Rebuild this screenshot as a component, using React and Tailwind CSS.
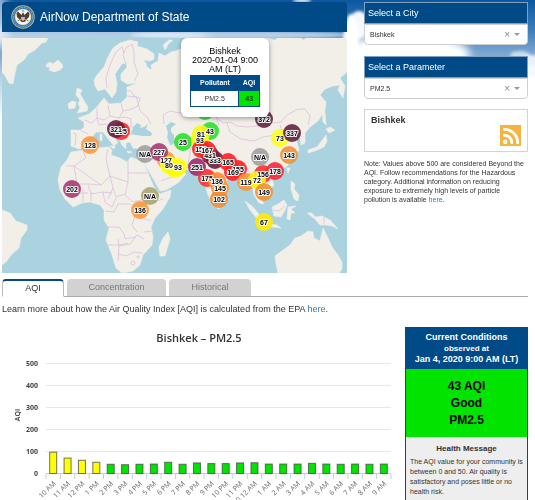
import React from "react";
import { Rss } from "lucide-react";

const land = [
  "M2 38H48L46 42 42 43 35 50 28 54 24 60 17 65 15 73 13 84 9 83 4 74 2 73Z",
  "M47 64L50 62 53 64 58 60 62 64 63 67 60 70 54 72 49 70 50 67 46 67Z",
  "M94 80L97 75 104 67 108 57 113 48 120 43 130 40 138 42 137 46 147 49 154 54 154 59 150 61 143 60 146 63 147 67 152 70 151 65 158 61 159 53 165 56 171 52 180 49 190 45 198 38H347V72L340 78 345 86 343 98 338 90 340 85 333 86 325 89 320 95 326 102 325 110 318 121 310 127 305 133 305 143 301 145 300 136 292 136 297 142 299 150 294 158 286 167 276 171 270 174 274 185 267 192 261 187 257 188 259 196 264 204 259 203 254 195 252 185 247 178 243 172 235 173 225 182 219 190 217 203 214 206 208 195 203 177 196 174 192 170 181 169 169 161 167 163 175 170 180 168 186 174 178 183 166 190 160 191 154 180 144 163 147 156 147 149 140 149 133 148 130 142 126 143 126 149 122 145 118 137 109 129 110 134 118 142 114 146 110 141 103 132 96 132 92 137 89 140 88 145 79 149 71 146 71 130 80 130 84 128 84 122 78 118 89 114 97 107 100 103 104 98 109 104 121 103 127 97 127 87 138 83 127 84 121 80 121 74 127 67 126 63 122 64 115 74 117 83 116 92 112 98 109 94 105 89 98 91 95 86Z",
  "M77 88L82 90 80 94 83 99 86 104 88 107 87 111 82 112 77 113 80 108 78 103 80 100 76 95Z",
  "M68 104L72 101 76 102 75 108 69 109Z",
  "M71 152L85 150 97 148 109 147 112 150 111 155 120 158 127 162 131 157 138 160 143 161 150 178 154 187 160 194 171 190 170 197 163 209 155 218 151 227 153 237 152 245 143 255 140 265 133 271 122 273 116 268 112 255 106 240 109 228 104 220 104 210 100 205 90 202 82 203 73 207 65 199 60 190 58 180 61 167 67 160Z",
  "M168 232L170 239 165 256 160 256 159 247 163 238Z",
  "M2 210L10 213 16 221 27 225 27 230 21 238 19 248 12 254 6 262 2 265Z",
  "M278 273L276 264 275 256 283 250 290 245 295 238 301 236 308 231 313 232 314 238 320 241 323 228 328 238 332 247 338 255 342 262 342 269 339 273Z",
  "M307 213L312 213 315 217 322 216 330 220 338 229 332 226 326 225 320 225 315 219Z",
  "M272 207L278 204 284 200 287 205 284 212 281 217 274 216Z",
  "M245 201L252 206 258 213 263 221 259 221 250 210Z",
  "M262 223L277 225 281 228 265 226Z",
  "M288 207L296 206 291 209 295 213 291 213 290 220 287 219Z",
  "M291 181L295 184 294 189 299 195 298 201 294 199 291 189Z",
  "M217 204L220 206 219 209 217 208Z",
  "M287 168L290 168 288 173Z",
  "M326 129L330 127 335 130 329 133ZM326 135L327 141 324 147 315 151 308 153 308 150 317 147Z",
  "M322 108L325 112 326 125 323 122Z",
  "M100 134L102 134 102 141 100 140ZM110 146L115 146 114 149ZM127 151L132 152 128 153ZM139 151L143 150 141 153Z",
  "M163 45L169 40 176 39 169 43 165 50Z",
];
const seas = [
  "M131 134L133 127 137 123 141 125 140 128 144 127 148 124 146 129 152 133 151 136 143 136 136 135Z",
  "M166 126L171 122 176 124 171 128 171 132 174 135 174 144 170 145 167 137 168 133Z",
  "M169 38H182V48L175 51 170 49 176 43Z",
  "M268 38H278L274 40ZM301 38L303 40 306 38Z",
];
const borders = [
  "M107 88L106 78 110 65 116 52 122 47 124 53 M126 64L123 55 126 48 132 44 134 52 134 62 138 74 134 81",
  "M84 120L92 123 97 118 97 108 M97 118L104 120 110 116 108 105 M110 116L119 118 123 111 121 103 M123 111L132 109 139 105 136 97 127 96 M122 89L131 91 134 96 140 98 138 105 141 112 147 117 151 124 M97 118L99 125 106 124 112 125 119 124 126 126 133 127 M119 118L125 117 131 119 131 126 M110 126L116 131 122 136 128 134 133 134 M73 133L76 134 75 146 M80 130L88 134",
  "M164 124L163 115 170 111 180 113 187 111 190 105 200 106 210 111 216 117 223 123 230 122 237 126 247 127 257 126 266 121 274 123 281 122 287 115 298 109 305 109 310 116 308 125",
  "M227 123L230 132 241 139 254 141 263 137 275 135 282 131 280 125 M216 117L219 125 210 131 204 137 M204 137L212 144 214 154 225 159 238 160 243 164 M172 142L184 141 190 145 190 155 187 168 M190 148L202 147 208 150 202 160 196 173 M147 148L158 146 164 152 165 161 M147 158L158 161 164 165 M161 181L174 176 178 170 M243 164L249 171 252 182 M252 172L260 178 266 174 M256 169L263 168 270 172",
  "M83 151L86 158 74 166 66 166 M74 166L101 185 110 176 106 159 108 149 M74 166L77 184 66 185 M77 184L88 184 101 185 M110 176L128 182 128 161 M128 173H147 M128 182L125 195 133 202 145 199 148 187 M110 176L113 188 108 199 M88 185L91 194 103 192 112 193 M113 188L116 197 125 194 M67 186L76 186 79 193 88 193 M83 188L83 202 M91 192L91 201 M103 192L105 202 112 207 116 198 M105 211L114 212 118 204 131 204 136 212 132 225 137 232 M107 227L119 227 124 234 125 239 136 237 M118 239L119 246 118 261 M119 246L130 244 137 235 144 239 M106 245L119 245 128 243 M118 254L126 256 134 252 142 253 M137 213L147 220 151 220 M141 202L145 214 M145 199L154 202 163 199 M144 232L152 231",
  "M273 210L279 211 285 206 M324 217L324 225",
];

const markers = [
  [121, 131, "195", "#ff2525"], [116, 129, "321", "#66213f"],
  [90, 145, "128", "#ff983b"], [72, 189, "202", "#a93b75"],
  [145, 154, "N/A", "#a0a0a0"], [166, 160, "127", "#ff983b"], [159, 152, "227", "#a93b75"],
  [150, 196, "N/A", "#a9a771"], [140, 210, "136", "#ff983b"],
  [175, 169, "", "#ffff00"], [169, 165, "80", "#ffff00"], [178, 167, "93", "#ffff00"],
  [205, 111, "", "#2be02b"], [183, 142, "25", "#2be02b"],
  [210, 131, "43", "#2be02b"], [201, 134, "81", "#f5fa16"], [200, 140, "93", "#f8f80e"],
  [201, 149, "159", "#ff2020"], [215, 160, "333", "#66213f"], [210, 155, "431", "#801e40"],
  [207, 150, "167", "#ff2020"], [228, 162, "165", "#ff2020"], [238, 169, "155", "#ff2020"],
  [233, 172, "169", "#ff2020"], [197, 167, "251", "#a02b70"],
  [207, 178, "175", "#ff3030"], [217, 181, "136", "#ff8b2b"],
  [220, 188, "145", "#ff983b"], [219, 199, "102", "#f18d31"],
  [246, 182, "119", "#f8943b"], [263, 174, "156", "#ff3030"], [257, 180, "72", "#fff21a"],
  [275, 171, "178", "#f7293a"], [264, 192, "149", "#ed9236"],
  [260, 157, "N/A", "#a0a0a0"], [289, 155, "143", "#ed9236"],
  [280, 138, "73", "#ffff18"], [292, 133, "337", "#66213f"],
  [264, 119, "372", "#66213f"], [264, 222, "67", "#ffea00"],
];

const readings = [
  ["10 AM", 97], ["11 AM", 70], ["12 PM", 60], ["1 PM", 51], ["2 PM", 42], ["3 PM", 40],
  ["4 PM", 42], ["5 PM", 43], ["6 PM", 51], ["7 PM", 42], ["8 PM", 48], ["9 PM", 45],
  ["10 PM", 45], ["11 PM", 48], ["Jan 4, 2020 12 AM", 49], ["1 AM", 43], ["2 AM", 43],
  ["3 AM", 43], ["4 AM", 46], ["5 AM", 43], ["6 AM", 42], ["7 AM", 43], ["8 AM", 42], ["9 AM", 43],
];

function Sky() {
  return (
    <svg aria-hidden="true" className="absolute inset-x-0 top-0 h-[150px] w-full" viewBox="0 0 535 150" preserveAspectRatio="none">
      <defs>
        <linearGradient id="sky" x1="0" y1="0" x2="0" y2="1">
          <stop offset="0" stopColor="#0b57a0" />
          <stop offset=".2" stopColor="#3c7dbb" />
          <stop offset=".5" stopColor="#b5cde5" />
          <stop offset=".8" stopColor="#fff" />
        </linearGradient>
        <filter id="soft"><feGaussianBlur stdDeviation="4" /></filter>
        <filter id="puff"><feGaussianBlur stdDeviation="1.5" /></filter>
      </defs>
      <rect width="535" height="150" fill="url(#sky)" />
      <g fill="#fff" filter="url(#soft)">
        <ellipse cx="60" cy="36" rx="150" ry="10" opacity=".6" />
        <ellipse cx="0" cy="20" rx="8" ry="30" opacity=".6" />
        <ellipse cx="380" cy="90" rx="75" ry="48" />
        <ellipse cx="500" cy="105" rx="90" ry="38" />
        <ellipse cx="405" cy="55" rx="65" ry="22" />
      </g>
      <g fill="#fff" filter="url(#puff)">
        <ellipse cx="359" cy="25" rx="10" ry="14" opacity=".95" />
        <ellipse cx="351" cy="46" rx="8" ry="32" />
        <ellipse cx="302" cy="0" rx="9" ry="3" opacity=".8" />
        <ellipse cx="240" cy="35" rx="110" ry="4" opacity=".6" />
        <ellipse cx="520" cy="55" rx="10" ry="4" opacity=".6" />
        <ellipse cx="532" cy="64" rx="12" ry="9" opacity=".8" />
      </g>
    </svg>
  );
}

function Seal() {
  return (
    <svg aria-label="Department of State seal" role="img" viewBox="0 0 48 48" className="size-6 shrink-0">
      <circle cx="24" cy="24" r="23.5" fill="#b9b98e" />
      <circle cx="24" cy="24" r="21.500" fill="#2f6ba5" />
      <circle cx="24" cy="24" r="19" fill="none" stroke="#a9c6dd" strokeWidth="2" strokeDasharray="2 1.500" />
      <circle cx="24" cy="24" r="16" fill="#fafaf5" stroke="#d9cf9a" />
      <circle cx="24" cy="12" r="3" fill="#9bbfd8" />
      <path d="M21 20L14 13 11 17 12 24 16 28 20 29 18 32 22 34 26 34 30 32 28 29 32 28 36 24 37 17 34 13 27 20 25 16 23 16Z" fill="#5a3c22" />
      <path d="M20 21H28V28L24 32 20 28Z" fill="#fff" />
      <path d="M20 20H28V24H20Z" fill="#264e86" />
      <path d="M21.500 24V29M24 24V31M26.500 24V29" stroke="#bd3333" strokeWidth="1.300" />
      <path d="M13 32L18 29M35 32L30 29" stroke="#547a45" strokeWidth="2" />
    </svg>
  );
}

function WorldMap() {
  return (
    <div className="relative mt-[6px] h-[235px] overflow-hidden bg-[#aad3df]">
      <svg role="img" aria-label="World air quality map" viewBox="2 38 345 235" preserveAspectRatio="xMidYMid slice" className="block size-full">
        <g fill="#f2efe9" stroke="#f2efe9" strokeWidth=".6" strokeLinejoin="round">
          {land.map((d) => <path key={d} d={d} />)}
        </g>
        {seas.map((d) => <path key={d} d={d} fill="#aad3df" />)}
        <g fill="none" stroke="#dcbfdc" strokeWidth=".8" strokeLinejoin="round">
          {borders.map((d) => <path key={d} d={d} />)}
          <circle cx="133" cy="263" r="2" />
          <circle cx="138" cy="257" r="1" />
        </g>
        <g fillOpacity=".9">
          {markers.map(([x, y, , color], i) => (
            <circle key={i} cx={x} cy={y} r="9" fill={color} />
          ))}
        </g>
        <g textAnchor="middle" fill="#000" stroke="#fff" strokeWidth="2" strokeLinejoin="round" paintOrder="stroke" className="font-['Liberation_Sans',Arial,sans-serif] text-[7px] font-bold">
          {markers.filter((m) => m[2]).map(([x, y, label], i) => (
            <text key={i} x={x} y={y + 3}>{label}</text>
          ))}
        </g>
      </svg>
      <div className="absolute top-0 left-[179px] w-[88px] rounded-md bg-white px-[9px] pt-[9px] pb-[10px] text-center shadow-[0_1px_5px_rgba(0,0,0,0.4)]">
        <p className="text-[9px] leading-[9px] text-black">Bishkek<br />2020-01-04 9:00<br />AM (LT)</p>
        <table className="mt-px w-full border-collapse border border-[#004b87] text-[7px] leading-[14px]">
          <thead className="bg-[#004b87] text-white">
            <tr><th scope="col">Pollutant</th><th scope="col">AQI</th></tr>
          </thead>
          <tbody>
            <tr className="h-4">
              <td className="border border-[#004b87]">PM2.5</td>
              <td className="border border-[#004b87] bg-[#00e400] font-bold">43</td>
            </tr>
          </tbody>
        </table>
      </div>
    </div>
  );
}

function Picker({ id, label, value, options }) {
  return (
    <div>
      <label htmlFor={id} className="block h-[22px] border border-[#7f9fbd] bg-[#004b87] px-[3px] text-[9px] leading-5 text-white">{label}</label>
      <div className="relative flex h-[21px] rounded-b-sm border border-[#cfcfcf] bg-white">
        <select id={id} defaultValue={value} className="h-[19px] w-full appearance-none bg-transparent px-[5px] text-[7px] leading-[18px] text-[#333] outline-none">
          {options.map((o) => <option key={o}>{o}</option>)}
        </select>
        <button type="button" aria-label={"Clear " + label} className="absolute top-[4px] right-[17px] text-[10px] leading-3 text-[#888]">×</button>
        <span className="pointer-events-none absolute top-[8px] right-[7px] border-x-[3px] border-t-[3px] border-x-transparent border-t-[#999]" />
      </div>
    </div>
  );
}

function Chart() {
  return (
    <svg role="img" aria-label="Bishkek – PM2.5 hourly AQI" viewBox="0 320 397 220" className="block w-full font-['Open_Sans','Noto_Sans',sans-serif]">
      <text x="199" y="342" textAnchor="middle" fill="#333" className="text-[11px] font-semibold">Bishkek – PM2.5</text>
      {[0, 100, 200, 300, 400, 500].map((v) => (
        <g key={v}>
          <path d={`M46 ${473.5 - v * 0.22}H391`} stroke={v ? "#e8e8e8" : "#c0d0e0"} />
          <text x="38" y={475.5 - v * 0.22} textAnchor="end" fill="#444" className="text-[7px] font-bold">{v}</text>
        </g>
      ))}
      <text transform="translate(20 415) rotate(-90)" textAnchor="middle" fill="#333" className="text-[7px] font-semibold">AQI</text>
      {readings.map(([label, v], i) => {
        const x = 53.2 + i * 14.375;
        return (
          <g key={label}>
            <path d={`M${x - 7.2} 474V479`} stroke="#c0d0e0" />
            <rect x={x - 3.5} y={473.5 - v * 0.22} width="7" height={v * 0.22} fill={v > 50 && i < 4 ? "#ffff00" : "#00e400"} stroke="#444" strokeOpacity=".75" />
            <text transform={`translate(${x + 3} 484) rotate(-45)`} textAnchor="end" fill="#666" className="text-[7px]">{label}</text>
          </g>
        );
      })}
      <path d="M391 474V479" stroke="#c0d0e0" />
    </svg>
  );
}

export default function App() {
  return (
    <div className="relative min-h-screen overflow-hidden bg-white font-['Liberation_Sans',Arial,sans-serif] text-[#333]">
      <Sky />
      <div className="relative">
        <div className="flex gap-[17px] pt-[2px] pr-[7px] pl-[2px]">
          <main className="min-w-0 flex-1">
            <header className="flex h-[30px] items-center gap-[5px] rounded-t bg-[#004b87] pl-[9px]">
              <Seal />
              <h1 className="text-[12px] text-white">AirNow Department of State</h1>
            </header>
            <WorldMap />
          </main>
          <aside className="w-[164px] shrink-0">
            <div className="flex flex-col gap-[11px]">
              <Picker id="city" label="Select a City" value="Bishkek" options={["Bishkek", "Beijing", "Delhi"]} />
              <Picker id="parameter" label="Select a Parameter" value="PM2.5" options={["PM2.5", "Ozone"]} />
            </div>
            <section className="mt-[10px] flex h-[43px] justify-between border border-[#d4d4d4] bg-white px-[6px]">
              <h2 className="pt-[4px] text-[9px] leading-3 font-bold">Bishkek</h2>
              <a href="#rss" aria-label="Bishkek RSS feed" className="mt-[15px] flex size-[21px] items-center justify-center bg-[#f5b33f] text-white">
                <Rss size={20} strokeWidth={3.5} />
              </a>
            </section>
            <p className="mt-[7px] text-[7px] leading-[9px]">Note: Values above 500 are considered Beyond the AQI. Follow recommendations for the Hazardous category. Additional information on reducing exposure to extremely high levels of particle pollution is available <a href="#beyond" className="text-[#337ab7]">here</a>.</p>
          </aside>
        </div>
        <nav role="tablist" aria-label="Data views" className="mt-[6px] mr-[7px] ml-[2px] flex h-[18px] gap-[3px] border-b border-[#aaa] text-[9px]">
          <button type="button" role="tab" aria-selected="true" className="-mb-px w-[62px] rounded-t-sm border border-t-2 border-[#bbb] border-t-[#004b87] border-b-white bg-white">AQI</button>
          <button type="button" role="tab" aria-selected="false" className="w-[99px] rounded-t bg-[#d2d2d2] text-[#777]">Concentration</button>
          <button type="button" role="tab" aria-selected="false" className="w-[82px] rounded-t bg-[#d2d2d2] text-[#777]">Historical</button>
        </nav>
        <p className="mt-[6px] pl-[2px] text-[9px] leading-3">Learn more about how the Air Quality Index [AQI] is calculated from the EPA <a href="#epa" className="text-[#337ab7]">here</a>.</p>
        <div className="mt-[5px] flex items-start gap-[8px] pr-[7px]">
          <div className="min-w-0 flex-1"><Chart /></div>
          <section className="mt-[7px] w-[123px] shrink-0 border border-[#004b87] bg-[#eee] text-center">
            <h2 className="bg-[#004b87] py-[4px] text-[9px] leading-[11px] font-bold text-white">Current Conditions<br /><span className="text-[8px]">observed at</span><br />Jan 4, 2020 9:00 AM (LT)</h2>
            <p className="bg-[#00e400] pt-[9px] pb-[8px] text-[12px] leading-[17px] font-bold text-black">43 AQI<br />Good<br />PM2.5</p>
            <h3 className="mt-[6px] text-[8px] leading-3 font-bold">Health Message</h3>
            <p className="px-[4px] pt-[2px] pb-6 text-left text-[7px] leading-[10px]">The AQI value for your community is between 0 and 50. Air quality is satisfactory and poses little or no health risk.</p>
          </section>
        </div>
      </div>
    </div>
  );
}
